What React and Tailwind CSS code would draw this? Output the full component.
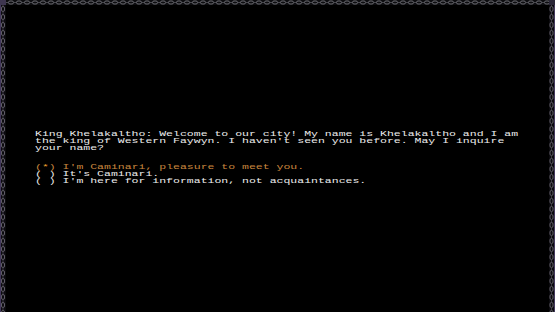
import React from "react";

function HChain() {
  return (
    <svg width="100%" height="5" className="block">
      <defs>
        <pattern id="hch" width="8" height="5" patternUnits="userSpaceOnUse" x="2">
          <rect x="0.5" y="1" width="5" height="3" rx="1.5" fill="none" stroke="#6b6b72" strokeWidth="1" />
          <line x1="5.5" y1="2.5" x2="8.5" y2="2.5" stroke="#4a4a50" strokeWidth="1" />
        </pattern>
      </defs>
      <rect width="100%" height="5" fill="#0d0d10" />
      <rect width="100%" height="5" fill="url(#hch)" />
    </svg>
  );
}

function VChain({ id, side }) {
  return (
    <svg width="6" height="100%" className="block">
      <defs>
        <pattern id={id} width="6" height="8" patternUnits="userSpaceOnUse" y="1">
          <rect x={side === "left" ? 1.5 : 1} y="0.5" width="3" height="5" rx="1.5" fill="none" stroke="#5f5c66" strokeWidth="1" />
          <line x1={side === "left" ? 3 : 2.5} y1="5.5" x2={side === "left" ? 3 : 2.5} y2="8.5" stroke="#403c46" strokeWidth="1" />
        </pattern>
      </defs>
      <rect width="6" height="100%" fill="#0b0a0e" />
      <rect width="6" height="100%" fill={`url(#${id})`} />
      <rect x={side === "left" ? 0 : 5} width="1" height="100%" fill="#43385c" />
    </svg>
  );
}

export default function App() {
  const txt = "whitespace-pre";
  return (
    <div className="w-[555px] h-[312px] bg-black flex flex-col overflow-hidden">
      <div className="flex h-[5px] shrink-0">
        <div className="w-[6px] h-[5px] bg-[#3e3650]" />
        <div className="flex-1">
          <HChain />
        </div>
        <div className="w-[6px] h-[5px] bg-[#2a2636]" />
      </div>
      <div className="flex flex-1 min-h-0">
        <div className="w-[6px] h-full">
          <VChain id="lch" side="left" />
        </div>
        <div className="flex-1 pl-[29px] pt-[126px]">
          <div
            className="origin-top-left scale-y-[0.6] text-[11.5px] leading-[11px] text-[#ececec]"
            style={{ fontFamily: '"Liberation Mono", "DejaVu Sans Mono", monospace' }}
          >
            <div className={txt}>King Khelakaltho: Welcome to our city! My name is Khelakaltho and I am</div>
            <div className={txt}>the king of Western Faywyn. I haven't seen you before. May I inquire</div>
            <div className={txt}>your name?</div>
            <div className={txt}> </div>
            <div className={txt}> </div>
            <div className={`${txt} text-[#c8863e]`}>
              (<span className="text-[#f0a030]">*</span>) I'm Caminari, pleasure to meet you.
            </div>
            <div className={txt}>( ) It's Caminari.</div>
            <div className={txt}>( ) I'm here for information, not acquaintances.</div>
          </div>
        </div>
        <div className="w-[6px] h-full">
          <VChain id="rch" side="right" />
        </div>
      </div>
    </div>
  );
}
